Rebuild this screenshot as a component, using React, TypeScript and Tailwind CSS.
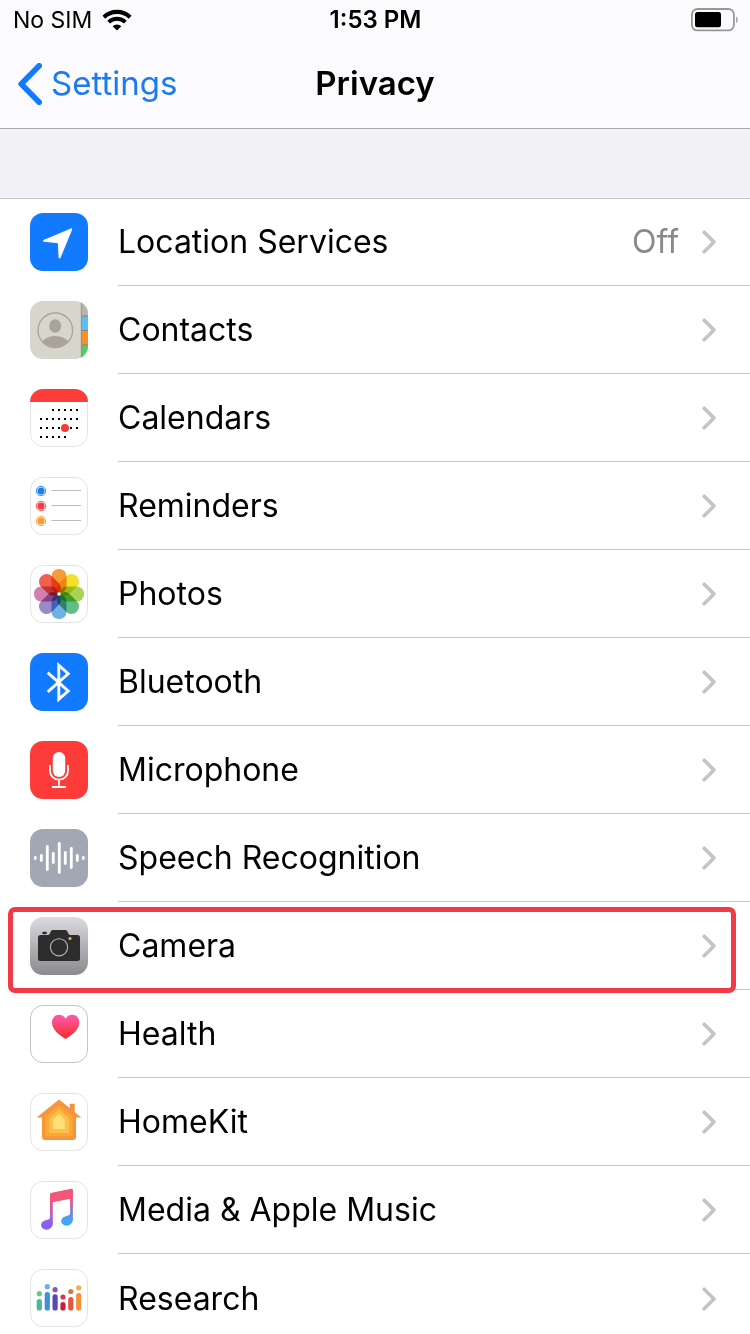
import type { ReactNode } from "react";

type Row = {
  label: string;
  icon: ReactNode;
  tile: string;
  value?: string;
  highlighted?: boolean;
};

const outlined = "bg-white border border-[#e3e3e5]";

function Glyph({ children }: { children: ReactNode }) {
  return (
    <svg viewBox="0 0 58 58" className="block size-[58px] shrink-0" fill="none" aria-hidden="true">
      {children}
    </svg>
  );
}

const locationIcon = (
  <Glyph>
    <path
      d="M14 27.8 41.2 16.4 29.6 44.4 28.8 29.2Z"
      fill="#fff"
      stroke="#fff"
      strokeWidth="2"
      strokeLinejoin="round"
    />
  </Glyph>
);

const contactsIcon = (
  <Glyph>
    <defs>
      <clipPath id="contact-ring">
        <circle cx="25.3" cy="29.3" r="16.8" />
      </clipPath>
    </defs>
    <path d="M51 0h7v15h-7z" fill="#b9b4ae" />
    <path d="M51 15h7v14.5h-7z" fill="#5dbdf2" />
    <path d="M51 29.5h7V44h-7z" fill="#f98f26" />
    <path d="M51 44h7v14h-7z" fill="#55cb66" />
    <path d="M51 15h7M51 29.5h7M51 44h7" stroke="#7f8580" strokeWidth="1" />
    <path d="M51.3 0v58" stroke="#8d8f89" strokeWidth="0.8" />
    <circle cx="25.3" cy="29.3" r="17.3" stroke="#aaa39d" strokeWidth="1.3" />
    <ellipse cx="25.2" cy="25" rx="6" ry="6.7" fill="#aaa39d" />
    <ellipse cx="25.3" cy="45" rx="14.5" ry="10" fill="#aaa39d" clipPath="url(#contact-ring)" />
  </Glyph>
);

const calendarDots = [
  { y: 21, from: 2, to: 6 },
  { y: 30, from: 0, to: 6 },
  { y: 39, from: 0, to: 6 },
  { y: 48, from: 0, to: 4 },
];

const calendarIcon = (
  <Glyph>
    <rect x="0.5" y="0.5" width="57" height="57" rx="12.5" stroke="#e3e3e5" />
    <path d="M0 0h58v13H0z" fill="#fc3d39" />
    {calendarDots.flatMap(({ y, from, to }) =>
      Array.from({ length: to - from + 1 }, (_, i) => (
        <rect key={`${y}-${i}`} x={10 + (from + i) * 6} y={y - 1} width="2" height="2" fill="#000" />
      )),
    )}
    <circle cx="35" cy="39" r="4" fill="#f23b3b" />
  </Glyph>
);

const remindersIcon = (
  <Glyph>
    {[
      { y: 14, color: "#1c7cf2" },
      { y: 29, color: "#ee3f42" },
      { y: 44, color: "#f69a33" },
    ].map(({ y, color }) => (
      <g key={y}>
        <circle cx="11" cy={y} r="4.7" stroke={color} strokeWidth="0.9" />
        <circle cx="11" cy={y} r="3.5" fill={color} />
        <path d={`M21.5 ${y - 0.5}H51`} stroke="#bcbcc0" strokeWidth="1" />
      </g>
    ))}
  </Glyph>
);

const petals = ["#f79a3c", "#f1e02c", "#a9d355", "#62bd84", "#6fb1e2", "#9b88c6", "#d27fae", "#f0604d"];

const photosIcon = (
  <Glyph>
    <g className="isolate">
      {petals.map((color, i) => (
        <rect
          key={color}
          x="21.5"
          y="4"
          width="15"
          height="24.4"
          rx="7.2"
          fill={color}
          transform={`rotate(${i * 45} 29 29)`}
          className="mix-blend-multiply"
        />
      ))}
    </g>
    <circle cx="29" cy="29" r="1.8" fill="#fff" />
  </Glyph>
);

const bluetoothIcon = (
  <Glyph>
    <path d="M17.7 19.6 38.2 38 28.8 46.2V12.2L38.2 20.8 17.7 38.8" stroke="#fff" strokeWidth="2.900" />
  </Glyph>
);

const microphoneIcon = (
  <Glyph>
    <rect x="22.8" y="11" width="12.4" height="25" rx="6.2" fill="#fff" />
    <path d="M20 24v5.7a9 9 0 0 0 18 0V24M29 38.8V46M22 46h14" stroke="#fff" strokeWidth="1.8" />
  </Glyph>
);

const speechIcon = (
  <Glyph>
    {[2, 4, 13, 6, 16, 7, 11, 4, 2].map((half, i) => (
      <rect key={i} x={3.9 + i * 6} y={29 - half} width="2.8" height={half * 2} rx="1.4" fill="#fff" />
    ))}
  </Glyph>
);

const cameraIcon = (
  <Glyph>
    <rect x="12.3" y="14.8" width="4.6" height="2.4" rx="1" fill="#2d2d2e" />
    <path
      d="M10.5 18h7.2c1.6 0 2-1 2.700-2.700.7-1.700 1.300-2.300 3-2.300h11.400c1.700 0 2.300.6 3 2.300.7 1.700 1.100 2.700 2.700 2.700h7A2.500 2.500 0 0 1 50 20.500v21a2.500 2.500 0 0 1-2.500 2.500h-37A2.500 2.500 0 0 1 8 41.500v-21A2.500 2.500 0 0 1 10.500 18Z"
      fill="#2d2d2e"
    />
    <circle cx="29" cy="30.3" r="8.6" stroke="#b4b4b6" strokeWidth="1.1" />
    <circle cx="40" cy="21.4" r="1.5" fill="#f2b84b" />
  </Glyph>
);

const healthIcon = (
  <Glyph>
    <defs>
      <linearGradient id="heart" x1="0" y1="0" x2="0" y2="1">
        <stop offset="0" stopColor="#fb5bb0" />
        <stop offset="1" stopColor="#fb2a24" />
      </linearGradient>
    </defs>
    <path
      d="M35.600 34C31 31 22 25.500 22 17.500c0-4.500 3-7.700 7-7.700 3 0 5.500 1.600 6.600 4 1.200-2.400 3.700-4 6.700-4 4 0 7 3.200 7 7.700 0 8-9 13.500-13.700 16.500Z"
      fill="url(#heart)"
    />
  </Glyph>
);

const homeIcon = (
  <Glyph>
    <path d="M39.700 10.700h5v9h-5z" fill="#f2913d" />
    <path d="M29 6.500 51.300 24.500H46V44a3 3 0 0 1-3 3H15a3 3 0 0 1-3-3V24.500H6.700Z" fill="#f7953a" />
    <path d="M29 12.500 42.500 23.300V43h-27V23.300Z" fill="#fba838" />
    <path d="M29 16.500 39 25v15H19V25Z" fill="#fdc04b" />
    <path d="M29 21 34.800 26.200V36H23.200v-9.800Z" fill="#fee078" />
  </Glyph>
);

const musicIcon = (
  <Glyph>
    <defs>
      <linearGradient id="note-left" gradientUnits="userSpaceOnUse" x1="0" y1="10" x2="0" y2="48">
        <stop offset="0.25" stopColor="#f3567a" />
        <stop offset="0.65" stopColor="#b65fd0" />
        <stop offset="0.85" stopColor="#8a61f5" />
      </linearGradient>
      <linearGradient id="note-right" gradientUnits="userSpaceOnUse" x1="0" y1="7" x2="0" y2="45">
        <stop offset="0.3" stopColor="#ef5785" />
        <stop offset="0.6" stopColor="#8a7bd0" />
        <stop offset="0.85" stopColor="#43a6f2" />
      </linearGradient>
    </defs>
    <path
      d="M20 14h2.800v28.600c0 3.500-2.600 6.100-6.200 6.100-3.200 0-5.500-1.900-5.500-4.600 0-2.900 2.200-4.600 5.400-5.200 2.500-.5 3.500-.9 3.500-2.700Z"
      fill="url(#note-left)"
    />
    <path
      d="M40.100 10h2.800v28.600c0 3.500-2.600 6.100-6.200 6.100-3.200 0-5.500-1.900-5.500-4.600 0-2.900 2.200-4.600 5.400-5.200 2.500-.5 3.500-.9 3.500-2.700Z"
      fill="url(#note-right)"
    />
    <path d="M20 13.800c0-1.200.5-1.700 1.700-2l19.500-4c1.300-.2 1.700.3 1.700 1.400v8L20 21.700Z" fill="#f3567a" />
  </Glyph>
);

const researchBars = [
  { x: 9.3, top: 30, dot: 24.7, bar: "#4fb3a0", cap: "#67c97a" },
  { x: 17.3, top: 23, dot: 17.7, bar: "#3f8fdc", cap: "#69b3e4" },
  { x: 25.1, top: 25.3, dot: 20.7, bar: "#5747b8", cap: "#8d4fc0" },
  { x: 33, top: 33, dot: 28, bar: "#c4203f", cap: "#d63750" },
  { x: 40.8, top: 28, dot: 22.5, bar: "#e4573f", cap: "#de7350" },
  { x: 48.7, top: 24, dot: 18.8, bar: "#f2913d", cap: "#f5ad55" },
];

const researchIcon = (
  <Glyph>
    {researchBars.map(({ x, top, dot, bar, cap }) => (
      <g key={x}>
        <rect x={x - 2.6} y={top} width="5.200" height={41.5 - top} rx="2.6" fill={bar} />
        <circle cx={x} cy={dot} r="2.600" fill={cap} />
      </g>
    ))}
  </Glyph>
);

const rows: Row[] = [
  { label: "Location Services", icon: locationIcon, tile: "bg-[#117aff]", value: "Off" },
  { label: "Contacts", icon: contactsIcon, tile: "bg-[#d6d6cc]" },
  { label: "Calendars", icon: calendarIcon, tile: "bg-white" },
  { label: "Reminders", icon: remindersIcon, tile: outlined },
  { label: "Photos", icon: photosIcon, tile: outlined },
  { label: "Bluetooth", icon: bluetoothIcon, tile: "bg-[#117aff]" },
  { label: "Microphone", icon: microphoneIcon, tile: "bg-[#fd3b39]" },
  { label: "Speech Recognition", icon: speechIcon, tile: "bg-[#a2a8b3]" },
  { label: "Camera", icon: cameraIcon, tile: "bg-linear-to-b from-[#dcdce0] to-[#8b8b8f]", highlighted: true },
  { label: "Health", icon: healthIcon, tile: "bg-white border border-[#c4c4c8]" },
  { label: "HomeKit", icon: homeIcon, tile: outlined },
  { label: "Media & Apple Music", icon: musicIcon, tile: outlined },
  { label: "Research", icon: researchIcon, tile: outlined },
];

function StatusBar() {
  return (
    <div className="grid h-10 grid-cols-3 items-center pr-3 pl-[13px] text-[23px]">
      <div className="flex items-center gap-[10px]">
        <span>No SIM</span>
        <svg viewBox="0 0 30 22" className="h-[22px] w-[30px]" fill="none" aria-label="Wi-Fi">
          <path d="M1.900 8.200a19 19 0 0 1 26.200 0" stroke="#000" strokeWidth="4.200" />
          <path d="M6.600 13.100a12.200 12.200 0 0 1 16.800 0" stroke="#000" strokeWidth="4" />
          <path d="M15 21.600 10.700 17.300a6.200 6.200 0 0 1 8.600 0Z" fill="#000" />
        </svg>
      </div>
      <span className="text-center text-2xl font-semibold">1:53 PM</span>
      <svg viewBox="0 0 48 24" className="h-6 w-12 justify-self-end" fill="none" aria-label="Battery">
        <rect x="1.900" y="1" width="42" height="21.400" rx="5.500" stroke="#98989a" strokeWidth="1.800" />
        <rect x="5" y="4" width="26" height="15.200" rx="2.500" fill="#000" />
        <path d="M46.200 8.500c2 1 2 5.600 0 6.600Z" fill="#98989a" />
      </svg>
    </div>
  );
}

function NavBar() {
  return (
    <nav className="grid h-[88px] grid-cols-[1fr_auto_1fr] items-center px-[18px] text-[33px]">
      <a href="#settings" className="flex items-center gap-[9px] text-[#1c7bee]">
        <svg viewBox="0 0 24 42" className="h-[42px] w-6" fill="none" aria-hidden="true">
          <path d="M21.200 2.800 3.200 21l18 18.200" stroke="#117aff" strokeWidth="5.600" strokeLinecap="round" strokeLinejoin="round" />
        </svg>
        Settings
      </a>
      <h1 className="font-semibold">Privacy</h1>
    </nav>
  );
}

function SettingsRow({ row, last }: { row: Row; last: boolean }) {
  return (
    <li className="relative">
      <a href={`#${row.label.toLowerCase().replace(/[^a-z]+/g, "-")}`} className="flex h-[88px] items-center gap-[30px] pl-[30px]">
        <span className={`flex size-[58px] shrink-0 items-center justify-center overflow-hidden rounded-[13px] ${row.tile}`}>
          {row.icon}
        </span>
        <span className={`flex h-full flex-1 items-center pt-px pr-[33px] ${last ? "" : "border-b border-[#c8c7cc]"}`}>
          <span className="flex-1">{row.label}</span>
          {row.value && <span className="mr-[22px] text-[#8a8a8e]">{row.value}</span>}
          <svg viewBox="0 0 16 24" className="h-6 w-4" fill="none" aria-hidden="true">
            <path d="M3.200 2.200 13 12l-9.800 9.800" stroke="#c4c4c7" strokeWidth="3.600" strokeLinecap="round" strokeLinejoin="round" />
          </svg>
        </span>
      </a>
      {row.highlighted && (
        <span className="pointer-events-none absolute top-[5px] right-[14px] -bottom-[3px] left-2 z-10 rounded-[7px] border-[5px] border-[#f03a48]" />
      )}
    </li>
  );
}

export default function App() {
  return (
    <div className="flex h-screen flex-col overflow-hidden bg-[#f2f1f6] font-['Inter','Liberation_Sans',sans-serif] text-black">
      <header className="shrink-0 border-b border-[#a8a8ad] bg-[#fbfbfd]">
        <StatusBar />
        <NavBar />
      </header>
      <main className="flex-1 overflow-y-auto pt-[69px] [scrollbar-width:none]">
        <ul className="bg-white text-[32px] shadow-[inset_0_1px_0_#c8c7cc]">
          {rows.map((row, i) => (
            <SettingsRow key={row.label} row={row} last={i === rows.length - 1} />
          ))}
        </ul>
      </main>
    </div>
  );
}
